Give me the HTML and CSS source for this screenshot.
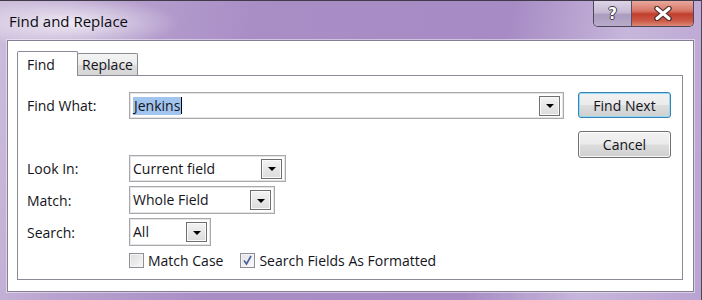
FILE: index.html
```html
<!DOCTYPE html>
<html>
<head>
<meta charset="utf-8">
<title>Find and Replace</title>
<link rel="stylesheet" href="styles.css">
</head>
<body>
<div class="window">
  <div class="titlebar">
    <div class="title">Find and Replace</div>
    <div class="caption-buttons">
      <div class="cap help">?</div>
      <div class="cap close">
        <svg width="20" height="15" viewBox="0 0 20 15">
          <path d="M4 2.5 L16 12.5 M16 2.5 L4 12.5" stroke="#4a2b28" stroke-width="5.5" stroke-linecap="round"/>
          <path d="M4 2.5 L16 12.5 M16 2.5 L4 12.5" stroke="#ffffff" stroke-width="3.2" stroke-linecap="round"/>
        </svg>
      </div>
    </div>
  </div>
  <div class="client">
    <div class="tabs">
      <div class="tab active">Find</div>
      <div class="tab inactive">Replace</div>
    </div>
    <div class="panel">
      <div class="form">
        <div class="row row-find">
          <div class="label">Find What:</div>
          <div class="combo combo-find">
            <div class="value"><span class="sel">Jenkins</span><span class="caret"></span></div>
            <div class="drop"><span class="tri"></span></div>
          </div>
        </div>
        <div class="row row-look">
          <div class="label">Look In:</div>
          <div class="combo combo-look">
            <div class="value">Current field</div>
            <div class="drop"><span class="tri"></span></div>
          </div>
        </div>
        <div class="row row-match">
          <div class="label">Match:</div>
          <div class="combo combo-match">
            <div class="value">Whole Field</div>
            <div class="drop"><span class="tri"></span></div>
          </div>
        </div>
        <div class="row row-search">
          <div class="label">Search:</div>
          <div class="combo combo-search">
            <div class="value">All</div>
            <div class="drop"><span class="tri"></span></div>
          </div>
        </div>
        <div class="checks">
          <div class="check"><span class="box"></span><span class="ctext">Match Case</span></div>
          <div class="check"><span class="box checked">
            <svg width="13" height="13" viewBox="0 0 13 13"><path d="M3 6.5 L5.5 10 L10 2" fill="none" stroke="#4b5e9a" stroke-width="1.6"/></svg>
          </span><span class="ctext">Search Fields As Formatted</span></div>
        </div>
      </div>
      <div class="buttons">
        <div class="btn default">Find Next</div>
        <div class="btn">Cancel</div>
      </div>
    </div>
  </div>
</div>
</body>
</html>
```

FILE: styles.css
```css
html, body {
  margin: 0;
  padding: 0;
  background: #ffffff;
}
body {
  width: 702px;
  height: 300px;
  overflow: hidden;
  font-family: "Open Sans", "Noto Sans", sans-serif;
  font-size: 14px;
  color: #141420;
}
.window {
  width: 702px;
  height: 300px;
  box-sizing: border-box;
  border-top: 1px solid #3f3b48;
  border-right: 1px solid #4d4858;
  padding: 0 7px 0 7px;
  display: flex;
  flex-direction: column;
  background:
    radial-gradient(ellipse 110px 26px at 70px 22px, rgba(255,255,255,0.75), rgba(255,255,255,0) 100%),
    linear-gradient(100deg, #cdbedb 0%, #b9a3cf 14%, #a98ec6 34%, #a68bc4 68%, #c7b6db 84%, #b9a3d2 100%);
}
.titlebar {
  height: 39px;
  display: flex;
  justify-content: space-between;
  align-items: flex-start;
  flex-shrink: 0;
}
.title {
  margin-left: 2px;
  padding-top: 10px;
  font-size: 15px;
  line-height: 20px;
  color: #0c0c12;
}
.caption-buttons {
  display: flex;
  height: 26px;
  border: 1px solid #4c4659;
  border-top: none;
  border-radius: 0 0 5px 5px;
  overflow: hidden;
  box-sizing: border-box;
}
.cap {
  height: 100%;
  display: flex;
  align-items: center;
  justify-content: center;
}
.help {
  width: 37px;
  border-right: 1px solid #5a4e62;
  background: linear-gradient(#ddd5e6 0%, #c6bad3 45%, #ab9cbf 55%, #b9abcb 100%);
  color: #ffffff;
  font-family: "DejaVu Sans", sans-serif;
  font-weight: bold;
  font-size: 15px;
  text-shadow: 1px 0 #3e3848, -1px 0 #3e3848, 0 1px #3e3848, 0 -1px #3e3848;
}
.close {
  width: 61px;
  background: linear-gradient(#e7a99d 0%, #d77565 40%, #c23e2d 52%, #cd5a48 80%, #dc8a78 100%);
}
.client {
  height: 252px;
  box-sizing: border-box;
  background: #ffffff;
  border: 1px solid #867e93;
  box-shadow: 0 0 0 1px rgba(255,255,255,0.45);
  padding: 10px 10px 0 9px;
  flex-shrink: 0;
}
.tabs {
  display: flex;
  align-items: flex-end;
  height: 24px;
}
.tab {
  box-sizing: border-box;
  border: 1px solid #898c95;
  border-bottom: none;
  border-radius: 2px 2px 0 0;
  line-height: 20px;
}
.tab.active {
  width: 61px;
  height: 25px;
  margin-bottom: -1px;
  background: #ffffff;
  padding: 3px 0 0 9px;
  position: relative;
  z-index: 1;
}
.tab.inactive {
  width: 61px;
  height: 22px;
  margin-left: -1px;
  text-align: center;
  background: linear-gradient(#f4f4f4 0%, #ebebeb 50%, #dcdcdc 51%, #d6d6d6 100%);
  padding-top: 1px;
}
.panel {
  height: 205px;
  box-sizing: border-box;
  border: 1px solid #898c95;
  display: flex;
  padding: 16px 11px 0 9px;
}
.form {
  flex: 1;
  display: flex;
  flex-direction: column;
}
.row {
  display: flex;
  align-items: center;
}
.label {
  width: 102px;
  flex-shrink: 0;
}
.combo {
  box-sizing: border-box;
  border: 1px solid #a9a9ad;
  box-shadow: inset 0 0 0 1px #e4e4e6;
  background: #ffffff;
  display: flex;
  align-items: center;
  justify-content: space-between;
  padding: 0 3px 0 3px;
}
.value {
  display: flex;
  align-items: center;
  line-height: 18px;
}
.sel {
  background: #a1c5ef;
  padding: 0 1px;
}
.caret {
  width: 1px;
  height: 17px;
  background: #000000;
}
.drop {
  width: 21px;
  height: 20px;
  box-sizing: border-box;
  border: 1px solid #6f6f6f;
  box-shadow: inset 0 0 0 1px #fafafa;
  background: linear-gradient(#f3f3f3, #dcdcdc);
  display: flex;
  align-items: center;
  justify-content: center;
}
.tri {
  width: 0;
  height: 0;
  border-left: 4px solid transparent;
  border-right: 4px solid transparent;
  border-top: 4px solid #000000;
  margin-top: 1px;
}
.combo-find { width: 435px; height: 27px; }
.row-look { margin-top: 36px; }
.combo-look { width: 157px; height: 27px; }
.row-match { margin-top: 4px; }
.combo-match { width: 146px; height: 28px; }
.row-search { margin-top: 4px; }
.combo-search { width: 82px; height: 28px; }
.checks {
  margin-top: 5px;
  margin-left: 102px;
  display: flex;
  align-items: center;
  gap: 17px;
  height: 18px;
}
.check {
  display: flex;
  align-items: center;
  gap: 4px;
}
.box {
  width: 15px;
  height: 15px;
  box-sizing: border-box;
  border: 1px solid #8e8f94;
  box-shadow: inset 0 0 0 1px #f4f4f4;
  background: linear-gradient(135deg, #dcdcdc, #f8f8f8);
  display: flex;
  align-items: center;
  justify-content: center;
}
.box.checked {
  background: linear-gradient(135deg, #e2e2e6, #fafafa);
}
.buttons {
  width: 94px;
  margin-left: 14px;
  display: flex;
  flex-direction: column;
  gap: 13px;
}
.btn {
  box-sizing: border-box;
  height: 27px;
  border: 1px solid #707070;
  border-radius: 3px;
  box-shadow: inset 0 0 0 1px rgba(255,255,255,0.85);
  background: linear-gradient(#f2f2f2 0%, #ebebeb 48%, #dddddd 52%, #cfcfcf 100%);
  display: flex;
  align-items: center;
  justify-content: center;
}
.btn.default {
  height: 26px;
  border-color: #3c7fb1;
  box-shadow: inset 0 0 0 1px #8fdcf8;
}
```
